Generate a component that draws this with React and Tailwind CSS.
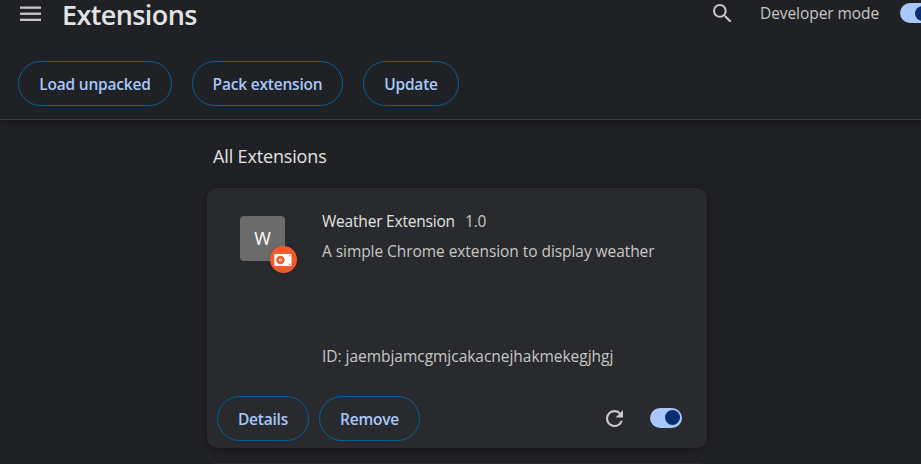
import React from "react";

const FONT = "font-['Segoe_UI','Open_Sans',sans-serif]";

function PillButton({ width, spacing, children }) {
  return (
    <button
      className={`flex h-[45px] shrink-0 items-center justify-center rounded-full border border-[#00639b] pt-0.5 text-[15.5px] font-semibold whitespace-nowrap text-[#a8c7fa] ${width} ${spacing}`}
    >
      {children}
    </button>
  );
}

function Toggle() {
  return (
    <div className="flex h-5 w-8 shrink-0 items-center justify-end rounded-full bg-[#a8c7fa] pr-0.5">
      <div className="size-[15px] rounded-full bg-[#062e6f]" />
    </div>
  );
}

function MenuIcon() {
  return (
    <svg width="21" height="16" viewBox="0 0 21 16" fill="#c7c7c7" className="shrink-0">
      <rect y="0.5" width="21" height="2.3" />
      <rect y="6.6" width="21" height="2.3" />
      <rect y="12.7" width="21" height="2.3" />
    </svg>
  );
}

function SearchIcon() {
  return (
    <svg width="18.5" height="18.5" viewBox="3 3 17.49 17.49" fill="#c7c7c7" className="shrink-0">
      <path d="M15.5 14h-.79l-.28-.27A6.47 6.47 0 0 0 16 9.5 6.5 6.5 0 1 0 9.5 16c1.61 0 3.09-.59 4.23-1.57l.27.28v.79l5 4.99L20.49 19l-4.99-5zm-6 0C7.01 14 5 11.99 5 9.5S7.01 5 9.5 5 14 7.01 14 9.5 11.99 14 9.5 14z" />
    </svg>
  );
}

function ReloadIcon() {
  return (
    <svg width="17" height="17" viewBox="4 4 16 16" fill="#c7c7c7" className="shrink-0">
      <path d="M17.65 6.35A7.958 7.958 0 0 0 12 4a8 8 0 1 0 7.73 10h-2.08A5.99 5.99 0 0 1 12 18c-3.31 0-6-2.69-6-6s2.69-6 6-6c1.66 0 3.14.69 4.22 1.78L13 11h7V4l-2.35 2.35z" />
    </svg>
  );
}

function UnpackedBadge() {
  return (
    <svg width="27" height="27" viewBox="0 0 27 27" className="absolute top-[30px] left-[30px] drop-shadow-sm">
      <circle cx="13.5" cy="13.5" r="13.5" fill="#f4592b" />
      <rect x="4.3" y="8" width="17.2" height="12" rx="1" fill="#fff" />
      <circle cx="10.4" cy="14" r="4.2" fill="#f4592b" />
      <circle cx="10.4" cy="14" r="1.6" fill="#fff" />
      <circle cx="10.4" cy="14" r="0.7" fill="#f4592b" />
      <circle cx="19.6" cy="9.8" r="0.8" fill="#f4592b" />
      <circle cx="19.6" cy="18.2" r="0.8" fill="#f4592b" />
    </svg>
  );
}

export default function App() {
  return (
    <div className={`flex h-[464px] w-[921px] flex-col overflow-hidden bg-[#202124] ${FONT}`}>
      <header className="z-10 h-[120px] shrink-0 border-b border-[#3c3d3f] shadow-[0_2px_5px_rgba(0,0,0,0.35)]">
        <div className="flex h-[30px] items-center pl-5">
          <div className="shrink-0 pb-[3px]"><MenuIcon /></div>
          <h1 className="ml-[21px] w-[600px] shrink-0 text-[27px] leading-[30px] font-semibold tracking-[-0.6px] text-[#e3e3e3]">Extensions</h1>
          <div className="ml-[51px] shrink-0 pb-[4px]"><SearchIcon /></div>
          <span className="ml-[28.5px] w-[120px] shrink-0 pb-0.5 text-[15.5px] tracking-[-0.07px] whitespace-nowrap text-[#c7c7c7]">Developer mode</span>
          <div className="ml-5 shrink-0 pb-1"><Toggle /></div>
        </div>
        <div className="mt-[31px] flex gap-5 pl-[18px]">
          <PillButton width="w-[154px]" spacing="tracking-[-0.2px]">Load unpacked</PillButton>
          <PillButton width="w-[151px]" spacing="tracking-[-0.2px]">Pack extension</PillButton>
          <PillButton width="w-[96px]" spacing="tracking-[-0.2px]">Update</PillButton>
        </div>
      </header>
      <main className="ml-[207px] flex w-[500px] shrink-0 flex-col self-start">
        <h2 className="mt-6 pl-1.5 text-[18px] leading-6 tracking-[-0.15px] text-[#e3e3e3]">All Extensions</h2>
        <section className="mt-5 flex h-[260px] flex-col rounded-[10px] bg-[#292a2d] shadow-[0_1px_6px_rgba(0,0,0,0.4)]">
          <div className="flex pt-[21px] pl-[33px]">
            <div className="relative mt-[7px] flex size-[45px] shrink-0 items-center justify-center rounded bg-[#6b6b6b] text-[18px] font-medium text-white">
              W
              <UnpackedBadge />
            </div>
            <div className="ml-[37px] flex flex-col text-[15.5px] leading-6 whitespace-nowrap text-[#c7c7c7]">
              <div className="flex">
                <span className="w-[143px] tracking-[-0.2px] text-[#e3e3e3]">Weather Extension</span>
                <span className="tracking-[-0.2px]">1.0</span>
              </div>
              <p className="mt-1.5 tracking-[-0.06px]">A simple Chrome extension to display weather</p>
              <p className="mt-[81px] tracking-[-0.03px]">ID: jaembjamcgmjcakacnejhakmekegjhgj</p>
            </div>
          </div>
          <div className="mt-7 flex items-center pl-2.5">
            <PillButton width="w-[92px]" spacing="tracking-[-0.2px]">Details</PillButton>
            <div className="ml-2.5"><PillButton width="w-[101px]" spacing="tracking-[-0.2px]">Remove</PillButton></div>
            <div className="ml-[186px]"><ReloadIcon /></div>
            <div className="-mt-0.5 ml-[27px]"><Toggle /></div>
          </div>
        </section>
        <div className="mx-1.5 mt-[15px] h-px bg-[#2b2b2d]" />
      </main>
    </div>
  );
}
